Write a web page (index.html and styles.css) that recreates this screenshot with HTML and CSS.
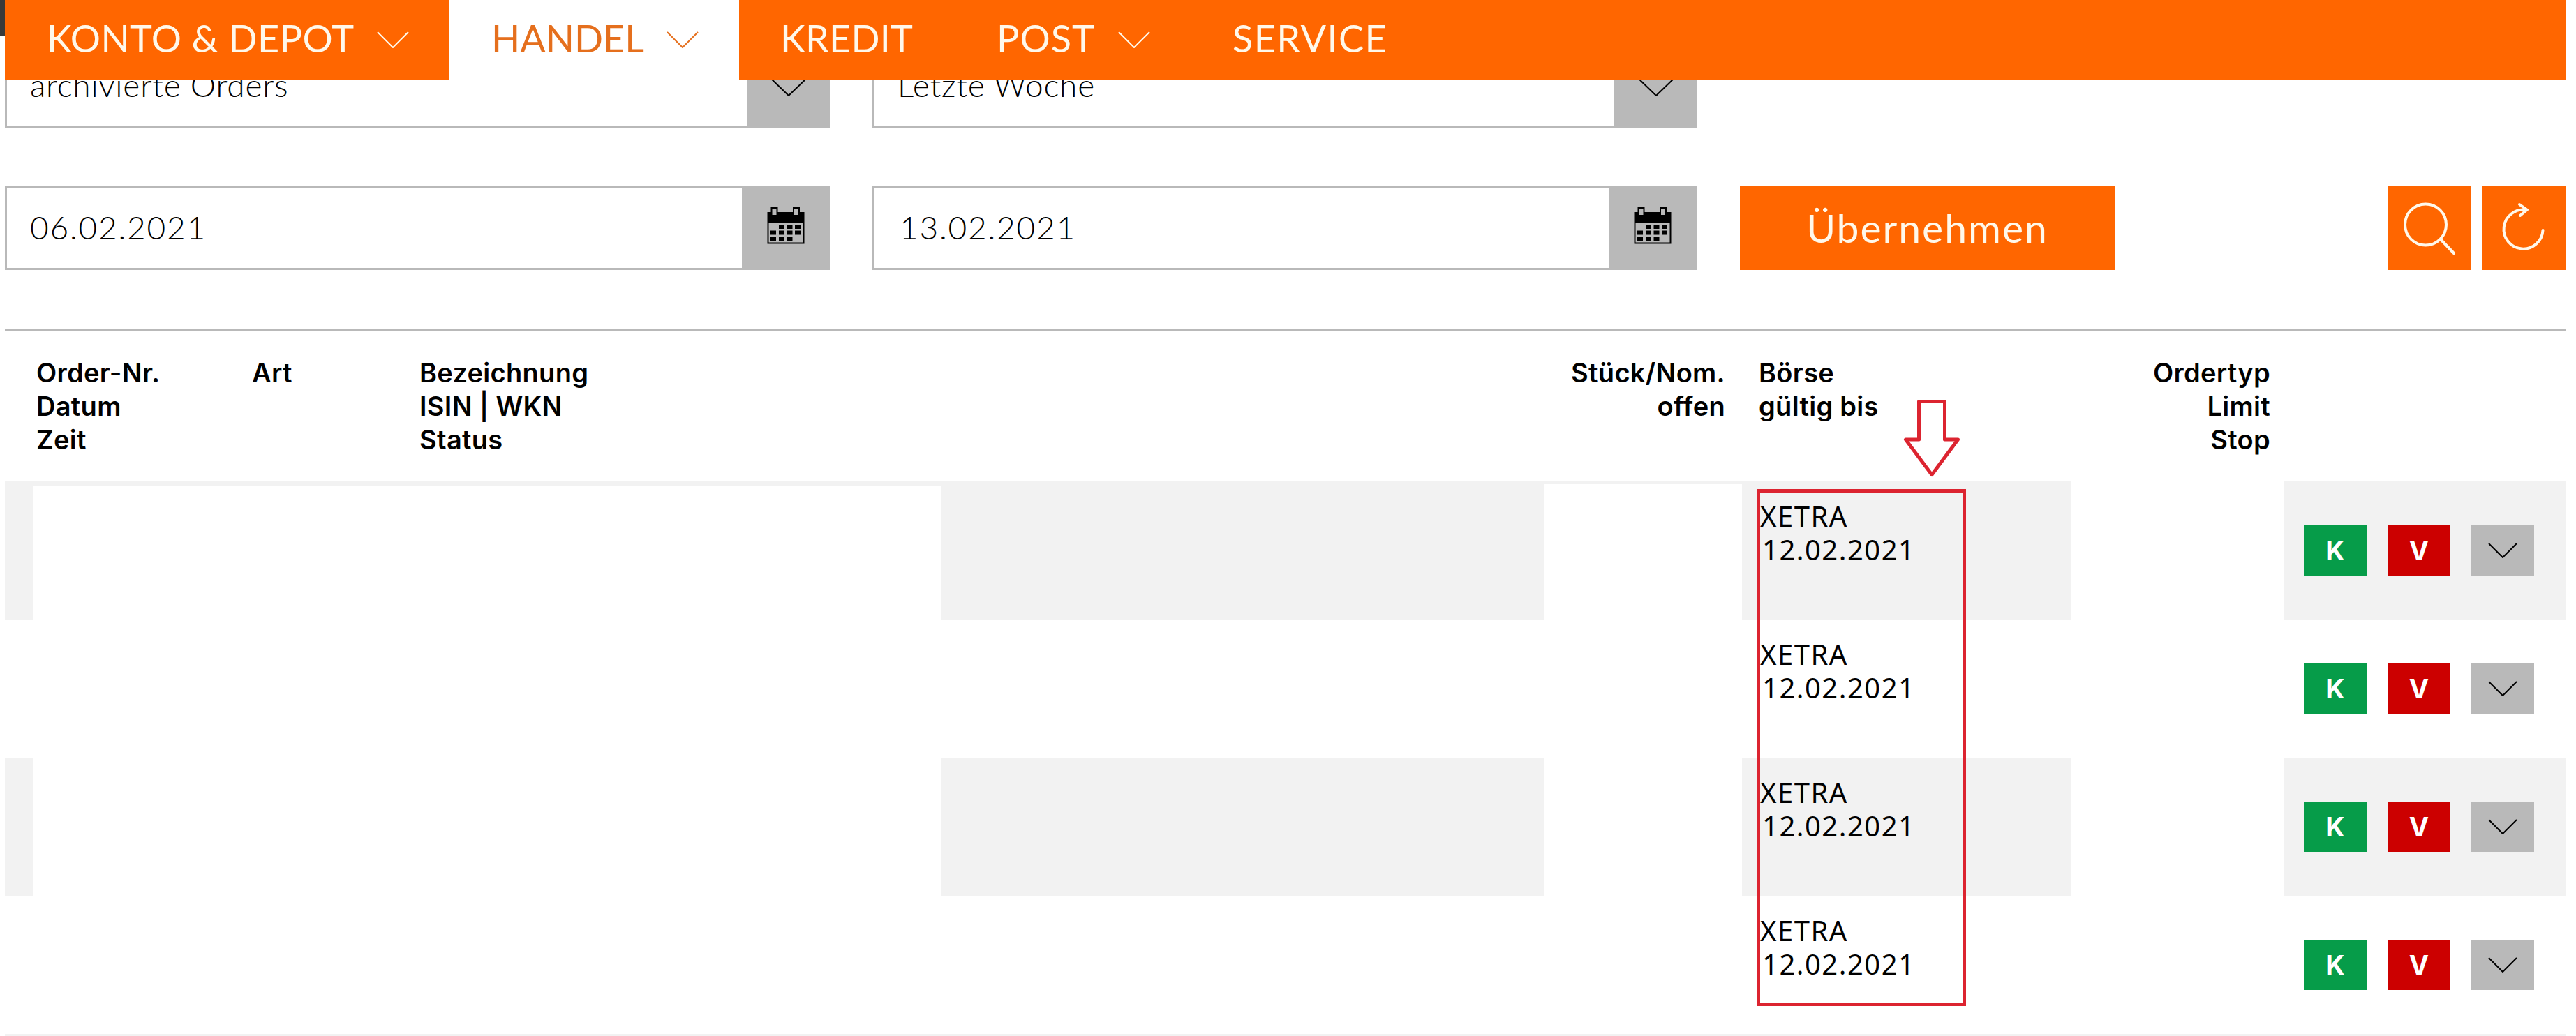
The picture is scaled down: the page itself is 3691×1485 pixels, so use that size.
FILE: index.html
```html
<!DOCTYPE html>
<html lang="de">
<head>
<meta charset="utf-8">
<title>Orders</title>
<link rel="stylesheet" href="styles.css">
</head>
<body>
<div class="corner"></div>
<nav class="nav">
  <a class="tab tab-konto">KONTO &amp; DEPOT <svg class="nav-chev" viewBox="0 0 46 24"><polyline points="1,1 23,23 45,1"/></svg></a>
  <a class="tab tab-handel">HANDEL <svg class="nav-chev" viewBox="0 0 46 24"><polyline points="1,1 23,23 45,1"/></svg></a>
  <a class="tab tab-kredit">KREDIT</a>
  <a class="tab tab-post">POST <svg class="nav-chev" viewBox="0 0 46 24"><polyline points="1,1 23,23 45,1"/></svg></a>
  <a class="tab tab-service">SERVICE</a>
</nav>
<main class="page">
  <div class="filters">
    <div class="field"><span class="value value-sel">archivierte Orders</span><span class="addon addon-sel"><svg class="sel-chev" viewBox="0 0 58 29"><polyline points="1,1 29,28 57,1"/></svg></span></div>
    <div class="field"><span class="value value-sel">Letzte Woche</span><span class="addon addon-sel"><svg class="sel-chev" viewBox="0 0 58 29"><polyline points="1,1 29,28 57,1"/></svg></span></div>
  </div>
  <div class="filters filters-date">
    <div class="field"><span class="value value-date">06.02.2021</span><span class="addon addon-cal"><svg class="cal" viewBox="0 0 54 53"><use href="#cal"/></svg></span></div>
    <div class="field field-c"><span class="value value-date value-c">13.02.2021</span><span class="addon addon-cal"><svg class="cal" viewBox="0 0 54 53"><use href="#cal"/></svg></span></div>
    <button class="apply">Übernehmen</button>
    <button class="icon-btn icon-search"><svg viewBox="0 0 120 120"><circle cx="54.5" cy="55" r="29.5"/><line x1="76" y1="76" x2="95" y2="96"/></svg></button>
    <button class="icon-btn icon-reload"><svg viewBox="0 0 120 120"><path d="M64 34 A28 28 0 1 0 87.5 63"/><polyline points="54,26 64.7,33.7 55,42"/></svg></button>
  </div>
  <hr class="rule">
  <div class="head">
    <div class="hc hc-a">Order-Nr.<br>Datum<br>Zeit</div>
    <div class="hc hc-b">Art</div>
    <div class="hc hc-c">Bezeichnung<br>ISIN | WKN<br>Status</div>
    <div class="hc hc-d">Stück/Nom.<br>offen</div>
    <div class="hc hc-e">Börse<br>gültig bis</div>
    <div class="hc hc-f">Ordertyp<br>Limit<br>Stop</div>
  </div>
  <div class="table">
    <div class="row odd first">
      <div class="c c-g"></div><div class="c c-w"></div><div class="c c-g"></div><div class="c c-w c-w2"></div>
      <div class="c c-g c-text">XETRA<br><span class="date">12.02.2021</span></div><div class="c"></div>
      <div class="c c-g c-actions"><span class="b b-k">K</span><span class="b b-v">V</span><span class="b b-m"><svg viewBox="0 0 42 22"><polyline points="1,1 21,21 41,1"/></svg></span></div>
    </div>
    <div class="row">
      <div class="c"></div><div class="c"></div><div class="c"></div><div class="c"></div>
      <div class="c c-text">XETRA<br><span class="date">12.02.2021</span></div><div class="c"></div>
      <div class="c c-actions"><span class="b b-k">K</span><span class="b b-v">V</span><span class="b b-m"><svg viewBox="0 0 42 22"><polyline points="1,1 21,21 41,1"/></svg></span></div>
    </div>
    <div class="row odd">
      <div class="c c-g"></div><div class="c c-w"></div><div class="c c-g"></div><div class="c c-w"></div>
      <div class="c c-g c-text">XETRA<br><span class="date">12.02.2021</span></div><div class="c"></div>
      <div class="c c-g c-actions"><span class="b b-k">K</span><span class="b b-v">V</span><span class="b b-m"><svg viewBox="0 0 42 22"><polyline points="1,1 21,21 41,1"/></svg></span></div>
    </div>
    <div class="row last">
      <div class="c"></div><div class="c"></div><div class="c"></div><div class="c"></div>
      <div class="c c-text">XETRA<br><span class="date">12.02.2021</span></div><div class="c"></div>
      <div class="c c-actions"><span class="b b-k">K</span><span class="b b-v">V</span><span class="b b-m"><svg viewBox="0 0 42 22"><polyline points="1,1 21,21 41,1"/></svg></span></div>
    </div>
  </div>
</main>
<div class="mark-box"></div>
<svg class="mark-arrow" viewBox="0 0 84 116"><polygon points="23.500,5.500 60.500,5.500 60.500,60 79.500,60 42,110.500 4.500,60 23.500,60"/></svg>
<svg class="defs" width="0" height="0">
  <symbol id="cal" viewBox="0 0 54 53">
    <rect x="0.5" y="7" width="53" height="45.5" fill="#000"/>
    <rect x="2.5" y="22" width="49" height="28.5" fill="#b9b9b9"/>
    <rect x="6.5" y="1" width="8" height="11" fill="#b9b9b9" stroke="#000" stroke-width="2"/>
    <rect x="38" y="1" width="8" height="11" fill="#b9b9b9" stroke="#000" stroke-width="2"/>
    <path fill="#000" d="M17 25h8v6h-8zM28.5 25h8v6h-8zM40 25h8v6h-8zM5 33.500h8v6H5zM17 33.500h8v6h-8zM28.500 33.500h8v6h-8zM40 33.500h8v6h-8zM5 42h8v6H5zM17 42h8v6h-8zM28.500 42h8v6h-8z"/>
  </symbol>
</svg>
</body>
</html>
```
FILE: styles.css
```css
* { box-sizing: border-box; }
html, body { margin: 0; padding: 0; background: #fff; }
body { width: 3691px; height: 1485px; overflow: hidden; position: relative; font-family: Lato, "Liberation Sans", sans-serif; color: #000; }

.corner { position: absolute; left: 0; top: 0; width: 7px; height: 51px; background: #3a3a3a; }

.nav { position: absolute; left: 7px; top: 0; width: 3669px; height: 114px; background: #ff6600; display: flex; align-items: stretch; z-index: 2; }
.tab { display: block; color: #fff8ea; font-size: 54px; line-height: 110px; font-weight: 400; letter-spacing: .4px; white-space: nowrap; }
.tab-konto { width: 637px; padding-left: 60px; }
.tab-handel { width: 415px; padding-left: 60px; background: #fff; color: #e56f1d; letter-spacing: 0; }
.tab-kredit { width: 309px; padding-left: 59px; letter-spacing: .2px; }
.tab-post { width: 398px; padding-left: 60px; letter-spacing: 1px; }
.tab-service { letter-spacing: 1.4px; }
.nav-chev { width: 46px; height: 24px; margin-left: 20px; vertical-align: 6px; fill: none; stroke: currentColor; stroke-width: 2; }

.page { padding: 63px 15px 0 7px; }
.filters { display: flex; gap: 61px; }
.filters-date { margin-top: 84px; }
.field { width: 1182px; height: 120px; border: 3px solid #b9b9b9; display: flex; align-items: center; justify-content: space-between; }
.field-c { width: 1181px; }
.value { padding: 0 0 4px 33px; font-size: 46px; font-weight: 300; color: #000; }
.value-sel { letter-spacing: .8px; }
.value-date { letter-spacing: 1.8px; }
.value-c { padding-left: 36px; }
.addon { height: 120px; margin: -3px -3px -3px 0; background: #b9b9b9; display: flex; align-items: center; justify-content: center; flex: none; }
.addon-sel { width: 119px; }
.addon-cal { width: 126px; }
.sel-chev { width: 58px; height: 29px; fill: none; stroke: #000; stroke-width: 2; }
.cal { width: 54px; height: 53px; margin-top: -8px; }

.apply { width: 537px; height: 120px; margin-left: 1px; border: 0; padding: 0 0 2px; background: #ff6600; color: #fff8ea; font: 400 57px Lato, "Liberation Sans", sans-serif; letter-spacing: 2px; }
.icon-btn { width: 120px; height: 120px; border: 0; padding: 0; background: #ff6600; flex: none; }
.icon-search { margin-left: 330px; }
.icon-reload { margin-left: -46px; }
.icon-btn svg { width: 120px; height: 120px; display: block; fill: none; stroke: #fff8ea; stroke-width: 4; stroke-linecap: round; }

.rule { margin: 85px 0 0; border: 0; height: 3px; background: #b9b9b9; }

.head { position: relative; height: 215px; font-family: Inter, Lato, sans-serif; font-size: 38px; line-height: 48px; font-weight: 600; letter-spacing: .3px; }
.hc { position: absolute; top: 35px; white-space: nowrap; }
.hc-a { left: 45px; }
.hc-b { left: 354px; }
.hc-c { left: 594px; }
.hc-d { right: 1204px; text-align: right; }
.hc-e { left: 2513px; }
.hc-f { right: 423px; text-align: right; }

.row { display: grid; grid-template-columns: 41px 1301px 863px 284px 471px 306px 403px; height: 198px; }
.c-g { background: #f2f2f2; }
.c-w { background: #fff; }
.first .c-w { border-top: 7px solid #f2f2f2; }
.first .c-w2 { border-top-width: 4px; }
.last { box-shadow: 0 3px 0 #f2f2f2; }
.c-text { padding: 26px 0 0 26px; font-family: "Noto Sans", "Open Sans", sans-serif; font-size: 40px; line-height: 48px; font-weight: 400; letter-spacing: 1.5px; white-space: nowrap; }
.date { display: inline-block; margin-left: 3px; }
.c-actions { display: flex; align-items: center; gap: 30px; padding-left: 28px; }
.b { width: 90px; height: 72px; display: flex; align-items: center; justify-content: center; color: #fff; font-family: Inter, "Open Sans", sans-serif; font-weight: 700; font-size: 38px; }
.b-k { background: #069c49; }
.b-v { background: #cc0000; }
.b-m { background: #b9b9b9; }
.b-m svg { width: 42px; height: 22px; fill: none; stroke: #000; stroke-width: 2; }

.mark-box { position: absolute; left: 2517px; top: 701px; width: 300px; height: 741px; border: 5px solid #dc2430; z-index: 3; }
.mark-arrow { position: absolute; left: 2726px; top: 570px; width: 84px; height: 116px; fill: none; stroke: #dc2430; stroke-width: 5; stroke-linejoin: round; z-index: 3; }
.defs { position: absolute; }
```
